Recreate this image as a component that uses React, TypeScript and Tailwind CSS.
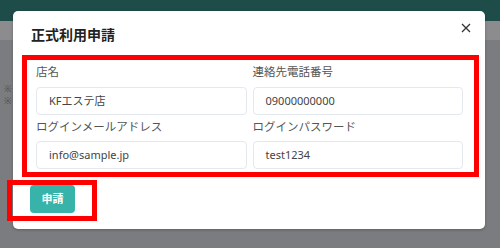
const FIELDS = [
  { label: '店名', value: 'KFエステ店' },
  { label: '連絡先電話番号', value: '09000000000' },
  { label: 'ログインメールアドレス', value: 'info@sample.jp' },
  { label: 'ログインパスワード', value: 'test1234' },
]

const font = { fontFamily: '"Noto Sans", "Noto Sans CJK JP", sans-serif' }

export default function App() {
  return (
    <div className="relative w-[500px] h-[248px] overflow-hidden bg-[#7b7c7f]" style={font}>
      {/* page behind the overlay */}
      <div className="h-[21px] bg-[#1e4c49]" />
      <div className="h-[19px] bg-[#8c8c8e]" />
      <div className="pt-[43px] pl-[4px] text-[9px] leading-[12px] text-[#4a4a4a]">
        <div className="h-[12px]">※</div>
        <div className="h-[12px]">※</div>
      </div>

      {/* modal */}
      <div className="absolute left-[13px] top-[11px] w-[472px] h-[218px] rounded-[5px] bg-white shadow-[0_1px_3px_rgba(0,0,0,0.25)]">
        <div className="flex items-start justify-between pt-[12px] pl-[18px] pr-[14px]">
          <h2 className="mt-[2px] text-[14px] leading-5 font-bold text-[#222]">正式利用申請</h2>
          <button className="w-[10px] h-[10px] text-[#333]">
            <svg viewBox="0 0 10 10" className="w-[10px] h-[10px]" fill="none" stroke="currentColor" strokeWidth="1.3">
              <path d="M1 1L9 9M9 1L1 9" />
            </svg>
          </button>
        </div>

        <div className="mt-[10px] ml-[9px] mr-[6px] border-[5px] border-[#ff0000]">
          <div className="grid grid-cols-2 gap-x-[6px] pt-[3px] pb-[3px] pl-[9px] pr-[11px]">
            {FIELDS.map((f, i) => (
              <div key={f.label} className={i >= 2 ? 'mt-[3px]' : ''}>
                <div className={`text-[11.5px] leading-[18px] text-[#555] ${i >= 2 ? 'mb-[5px]' : 'mb-[6px]'}`}>{f.label}</div>
                <div className="h-[28px] flex items-center px-[12px] rounded-[4px] border border-[#e4e9ef] text-[11px] text-[#444]">
                  {f.value}
                </div>
              </div>
            ))}
          </div>
        </div>

        <div className="mt-[8px] pl-[17px]">
          <button className="w-[45px] h-[28px] rounded-[4px] bg-[#37b3aa] text-white text-[11px] font-bold">申請</button>
        </div>
      </div>

      {/* annotation box */}
      <div className="absolute left-[7px] top-[180px] w-[90px] h-[41px] border-[5px] border-[#ff0000]" />
    </div>
  )
}
